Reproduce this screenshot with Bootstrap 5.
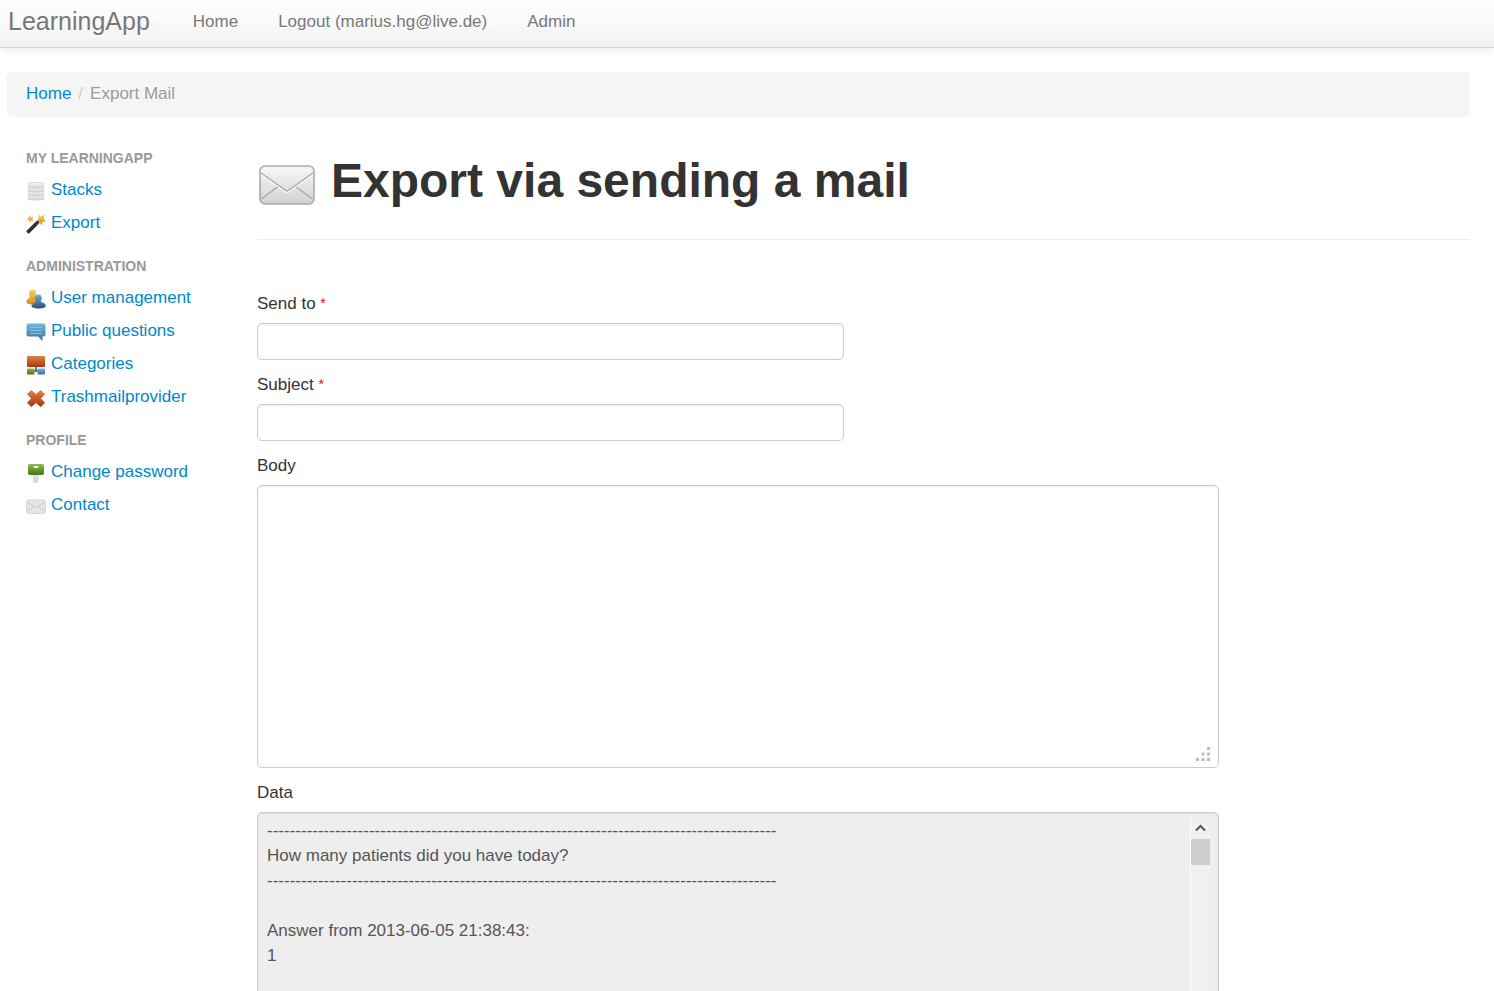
<!DOCTYPE html>
<html lang="en">
<head>
<meta charset="utf-8">
<meta name="viewport" content="width=device-width, initial-scale=1">
<title>LearningApp - Export Mail</title>
<link rel="stylesheet" href="https://cdn.jsdelivr.net/npm/bootstrap@5.3.0/dist/css/bootstrap.min.css">
<style>
  body { font-family: "Liberation Sans", Arial, sans-serif; font-size: 17px; line-height: 25px; color: #333; background: #fff; }
  a { color: #08c; text-decoration: none; }
  a:hover { color: #005580; text-decoration: underline; }
  .topbar { min-height: 48px; padding: 0 8px; background: linear-gradient(#fff, #f2f2f2); border-bottom: 1px solid #d4d4d4; box-shadow: 0 1px 10px rgba(0,0,0,.1); text-shadow: 0 1px 0 #fff; }
  .topbar .navbar-brand { font-size: 25px; line-height: 25px; color: #777; margin: 0 23px 4px 0; padding: 0; }
  .topbar .navbar-nav .nav-link { color: #777; padding: 0 20px 4px; }
  .page { padding: 24px 24px 0 7px; }
  .crumbs { background: #f5f5f5; border-radius: 5px; padding: 9px 19px 11px; margin-bottom: 27px; text-shadow: 0 1px 0 #fff; }
  .crumbs .breadcrumb-item + .breadcrumb-item { padding-left: 7px; color: #999; }
  .crumbs .breadcrumb-item + .breadcrumb-item::before { padding-right: 7px; color: #ccc; }
  .sidebar { flex: 0 0 250px; padding-left: 19px; }
  .side-title { font-size: 14px; line-height: 25px; height: 29px; padding-top: 2px; margin: 0; font-weight: 700; color: #999; text-transform: uppercase; }
  .side-list { margin-bottom: 13px; }
  .side-list a { display: flex; gap: 5px; line-height: 25px; padding: 4px 0; }
  .side-list svg { width: 20px; height: 20px; margin-top: 4px; }
  .page-head { padding: 7px 0 24px; border-bottom: 1px solid #eee; margin-bottom: 51px; gap: 14px; }
  .page-head h1 { font-size: 48px; line-height: 60px; font-weight: 700; margin: 0; }
  .page-head svg { width: 60px; height: 60px; margin-top: 4px; }
  .form-label { display: block; margin-bottom: 7px; }
  .req { color: red; font-size: 14px; line-height: 14px; vertical-align: 1px; }
  .field { margin-bottom: 12px; }
  .box { border: 1px solid #ccc; border-radius: 5px; box-shadow: inset 0 1px 2px rgba(0,0,0,.08); font-size: 17px; line-height: 25px; color: #555; }
  input.box { width: 48.4%; height: 37px; padding: 5px 8px; }
  .wide { width: 79.3%; }
  textarea.box { height: 283px; padding: 5px 9px; resize: none; }
  .grip { position: absolute; right: 8px; bottom: 6px; }
  .databox { height: 283px; background: #eee; padding: 5px 8px 5px 9px; }
  .databox textarea { border: 0; background: none; resize: none; overflow: hidden; padding: 0; color: #555; outline: 0; }
  .scroller { width: 20px; border-left: 1px solid #fff; background: #f0f0f0; }
  .scroller svg { display: block; margin: 6px 4px 7px; }
  .scroller span { display: block; height: 26px; background: #cdcdcd; }
</style>
</head>
<body>
<svg width="0" height="0" class="position-absolute" aria-hidden="true">
  <defs>
    <linearGradient id="gray" x2="0" y2="1"><stop stop-color="#f8f8f8"/><stop offset="1" stop-color="#d2d2d2"/></linearGradient>
    <linearGradient id="gold" x2="0" y2="1"><stop stop-color="#f9d45e"/><stop offset="1" stop-color="#d78a1d"/></linearGradient>
    <linearGradient id="blue" x2="0" y2="1"><stop stop-color="#71b8df"/><stop offset="1" stop-color="#376f98"/></linearGradient>
    <linearGradient id="navy" x2="0" y2="1"><stop stop-color="#6bb0d8"/><stop offset="1" stop-color="#2c526c"/></linearGradient>
    <linearGradient id="rust" x2="0" y2="1"><stop stop-color="#df8545"/><stop offset="1" stop-color="#a93311"/></linearGradient>
    <linearGradient id="green" x2="0" y2="1"><stop stop-color="#8db94f"/><stop offset="1" stop-color="#46741f"/></linearGradient>
  </defs>
</svg>

<nav class="navbar navbar-expand topbar">
  <a class="navbar-brand" href="#">LearningApp</a>
  <ul class="navbar-nav">
    <li class="nav-item"><a class="nav-link" href="#">Home</a></li>
    <li class="nav-item"><a class="nav-link" href="#">Logout (marius.hg@live.de)</a></li>
    <li class="nav-item"><a class="nav-link" href="#">Admin</a></li>
  </ul>
</nav>

<div class="container-fluid page">
  <nav aria-label="breadcrumb">
    <ol class="breadcrumb crumbs">
      <li class="breadcrumb-item"><a href="#">Home</a></li>
      <li class="breadcrumb-item active" aria-current="page">Export Mail</li>
    </ol>
  </nav>

  <div class="d-flex">
    <aside class="sidebar">
      <h2 class="side-title">My LearningApp</h2>
      <ul class="list-unstyled side-list">
        <li><a href="#"><svg viewBox="0 0 20 20"><g fill="url(#gray)" stroke="#d0d0d0" stroke-width=".7"><rect x="2" y="14" width="16" height="5" rx="2"/><rect x="2" y="10" width="16" height="5" rx="2"/><rect x="2" y="6" width="16" height="5" rx="2"/><rect x="2" y="1.500" width="16" height="5.500" rx="2"/></g></svg>Stacks</a></li>
        <li><a href="#"><svg viewBox="0 0 20 20"><path d="M1.500 18.500 12 8" stroke="#333" stroke-width="3.800"/><path d="m9.500 9 2.300 2.300L14 9l-2.200-2.200z" fill="#bbb"/><path d="m4 1 1 2.300 2.500-.3-1.300 2 1.300 2-2.500-.2-1.300 1.500L3 6.200.5 5.200 2.700 4zM12.500 0l2 2.500L18.500.5l-1 4L20 7.500l-3.500.5-1 3.500-1.500-3-4-1 2.500-2z" fill="url(#gold)"/><path d="M1.500 18.500 12.500 7.500" stroke="#333" stroke-width="2.500"/></svg>Export</a></li>
      </ul>
      <h2 class="side-title">Administration</h2>
      <ul class="list-unstyled side-list">
        <li><a href="#"><svg viewBox="0 0 20 20"><path d="M6.500 .5C9.500.5 10.500 3 10 5.500 9.800 7 9 8 9 9c2 1 4 2 4 4 0 1.500-3 2.500-6.500 2.500S0 14.500 .3 12.500C.6 10.500 2 9.500 3.500 8.500 4 7.500 3 6 3 4S4 .5 6.500 .5z" fill="url(#gold)"/><path d="M12.300 5.500c2.800 0 3.800 1.700 3.400 4.200-.2 1.300-.8 2.300-.7 3.300 2.500 1 5 1.800 4.800 4-.2 1.700-3.500 2.500-7.200 2.500S5.500 18.500 5.500 17c0-2 2.500-3 4.500-4 0-1-.8-2-1-3.500-.3-2.500.8-4 3.300-4z" fill="url(#navy)"/></svg>User management</a></li>
        <li><a href="#"><svg viewBox="0 0 20 20"><path d="M2.500 1.500h15a2 2 0 0 1 2 2v9a2 2 0 0 1-2 2h-1V19L12 14.500H2.500a2 2 0 0 1-2-2v-9a2 2 0 0 1 2-2z" fill="url(#blue)"/><path d="M4 5.500h12M4 8.500h12M4 11.500h12" stroke="#8fc6e8" stroke-width=".8"/></svg>Public questions</a></li>
        <li><a href="#"><svg viewBox="0 0 20 20"><path d="M10 11v5M6 16h8" stroke="#555" stroke-width="1.600"/><rect x="1" y="1" width="18" height="11" rx="1" fill="url(#rust)"/><rect x="1" y="13.500" width="7.500" height="6" rx="1" fill="url(#green)"/><rect x="11.500" y="13.500" width="7.500" height="6" rx="1" fill="url(#blue)"/></svg>Categories</a></li>
        <li><a href="#"><svg viewBox="0 0 20 20"><path d="M5.500 2.500 10 6.500l4.500-4L18.500 6 14.500 10.500l4 4.500-4 3.500-4.500-4-4.500 4L1.500 15l4-4.500L1.500 6z" fill="url(#rust)" stroke="url(#rust)" stroke-linejoin="round"/></svg>Trashmailprovider</a></li>
      </ul>
      <h2 class="side-title">Profile</h2>
      <ul class="list-unstyled side-list">
        <li><a href="#"><svg viewBox="0 0 20 20"><path d="M7.500 11h5l-.5 4 .5 1.500-1.500 3H8.500L7.500 18z" fill="#ddd" stroke="#c9c9c9" stroke-width=".7"/><rect x="2" y="1" width="16" height="11" rx="2" fill="url(#green)"/><rect x="7.500" y="3" width="5" height="2" rx="1" fill="#fff"/></svg>Change password</a></li>
        <li><a href="#"><svg viewBox="0 0 20 20"><rect x=".5" y="4" width="19" height="13.500" rx="2" fill="#e6e6e6" stroke="#d6d6d6"/><path d="m1.500 15.500 6-5m11 5-6-5M1.500 6l8.500 6 8.500-6" fill="none" stroke="#c8c8c8"/></svg>Contact</a></li>
      </ul>
    </aside>

    <main class="flex-grow-1">
      <div class="d-flex page-head">
        <svg viewBox="0 0 60 60"><rect x="3" y="11" width="54" height="38" rx="5" fill="url(#gray)" stroke="#aaa" stroke-width="1.600"/><path d="m4.500 44 17-13M55.500 44 38 31" fill="none" stroke="#aaa" stroke-width="1.500"/><path d="m4 19.500 24 17q2 1.500 4 0l24-17" fill="none" stroke="#fff" stroke-width="1.500"/><path d="m4 18 24 17q2 1.500 4 0L56 18" fill="none" stroke="#aaa" stroke-width="1.500"/></svg>
        <h1>Export via sending a mail</h1>
      </div>
      <form>
        <div class="field">
          <label class="form-label" for="to">Send to <span class="req">*</span></label>
          <input class="box d-block" id="to" type="text">
        </div>
        <div class="field">
          <label class="form-label" for="subject">Subject <span class="req">*</span></label>
          <input class="box d-block" id="subject" type="text">
        </div>
        <div class="field">
          <label class="form-label" for="body">Body</label>
          <div class="position-relative wide">
            <textarea class="box d-block w-100" id="body"></textarea>
            <svg class="grip" width="16" height="16" viewBox="0 0 16 16" fill="#bbb" aria-hidden="true"><path d="M12 1h3v3h-3zM6.500 6.500h3v3h-3zM12 6.500h3v3h-3zM1 12h3v3H1zM6.500 12h3v3h-3zM12 12h3v3h-3z"/></svg>
          </div>
        </div>
        <div class="field">
          <label class="form-label" for="data">Data</label>
          <div class="box wide databox d-flex">
            <textarea class="flex-grow-1" id="data" readonly>
------------------------------------------------------------------------------------------
How many patients did you have today?
------------------------------------------------------------------------------------------

Answer from 2013-06-05 21:38:43:
1</textarea>
            <div class="scroller" aria-hidden="true">
              <svg width="11" height="8" viewBox="0 0 11 8"><path d="m1 6.500 4.500-4.500L10 6.500" fill="none" stroke="#555" stroke-width="2"/></svg>
              <span></span>
            </div>
          </div>
        </div>
      </form>
    </main>
  </div>
</div>
<script src="https://cdn.jsdelivr.net/npm/bootstrap@5.3.0/dist/js/bootstrap.bundle.min.js"></script>
</body>
</html>
